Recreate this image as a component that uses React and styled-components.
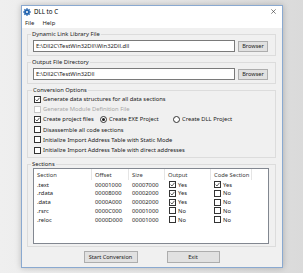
import React from 'react'
import styled, { createGlobalStyle } from 'styled-components'

const GlobalStyle = createGlobalStyle`
  html, body {
    margin: 0;
    padding: 0;
  }
  body {
    width: 303px;
    height: 273px;
    overflow: hidden;
    background: #e8e8e8;
    font-family: "Noto Sans", "Open Sans", sans-serif;
    color: #1a1a1a;
  }
`;

const Desktop = styled.div`
  width: 303px;
  height: 273px;
  box-sizing: border-box;
  padding: 5px 0 0 21px;
  background: linear-gradient(90deg, #efefef 0%, #e6e6e6 60%, #dadada 100%);
`;

const Window = styled.div`
  width: 262px;
  height: 263px;
  box-sizing: border-box;
  border: 1px solid #8aa9d0;
  background: #f0f0f0;
  box-shadow: 0 0 6px rgba(0, 0, 0, 0.22);
  display: flex;
  flex-direction: column;
`;

const TitleBar = styled.div`
  height: 11px;
  display: flex;
  align-items: center;
  gap: 3px;
  padding: 0 6px 0 1px;
  background: #fff;
  font-size: 6.2px;
  color: #000;
`;

const Title = styled.span`
  flex: 1;
`;

const Close = styled.svg`
  width: 5px;
  height: 5px;
`;

const MenuBar = styled.div`
  height: 11px;
  display: flex;
  align-items: center;
  gap: 8px;
  padding-left: 3px;
  background: #fff;
  font-size: 5.9px;
`;

const Body = styled.div`
  flex: 1;
  display: flex;
  flex-direction: column;
  padding: 0 6px 0 5px;
`;

const Group = styled.fieldset`
  margin: 2px 0 0;
  padding: ${p => p.$pad || '2px 7px 3px 5px'};
  border: 1px solid #dcdcdc;
  min-inline-size: 0;
`;

const Legend = styled.legend`
  padding: 0 1px;
  margin-left: -2px;
  font-size: 5.8px;
  line-height: 8px;
  color: #1a1a1a;
`;

const Row = styled.div`
  display: flex;
  align-items: center;
  gap: 3px;
`;

const TextBox = styled.div`
  flex: 1;
  height: 12px;
  box-sizing: border-box;
  border: 1px solid #7a7a7a;
  background: #fff;
  padding-left: 2px;
  display: flex;
  align-items: center;
  font-size: 5.8px;
`;

const Button = styled.div`
  width: ${p => p.$w || 30}px;
  height: ${p => p.$h || 11}px;
  box-sizing: border-box;
  border: 1px solid #adadad;
  background: #e1e1e1;
  display: flex;
  align-items: center;
  justify-content: center;
  font-size: 5.6px;
  color: #1a1a1a;
`;

const OptionRow = styled.div`
  height: 10.2px;
  display: flex;
  align-items: center;
`;

const Item = styled.div`
  display: flex;
  align-items: center;
  gap: 2px;
  width: ${p => (p.$w ? `${p.$w}px` : 'auto')};
  font-size: 5.8px;
  color: ${p => (p.$disabled ? '#a6a6a6' : '#1a1a1a')};
  white-space: nowrap;
`;

const Box = styled.span`
  width: 7px;
  height: 7px;
  box-sizing: border-box;
  border: 1px solid ${p => (p.$disabled ? '#c4c4c4' : '#333')};
  background: #fff;
  display: inline-flex;
  flex-shrink: 0;
`;

const Radio = styled.span`
  width: 7px;
  height: 7px;
  box-sizing: border-box;
  border: 1px solid #333;
  border-radius: 50%;
  background: #fff;
  display: inline-flex;
  align-items: center;
  justify-content: center;
  flex-shrink: 0;
  &::after {
    content: '';
    width: 3px;
    height: 3px;
    border-radius: 50%;
    background: ${p => (p.$on ? '#1a1a1a' : 'transparent')};
  }
`;

const Table = styled.div`
  height: 76px;
  box-sizing: border-box;
  border: 1px solid #828790;
  background: #fff;
`;

const Grid = styled.div`
  display: grid;
  grid-template-columns: 58px 37px 36px 46px 41px 1fr;
  height: ${p => p.$h}px;
  align-items: center;
  font-size: 5.8px;
  color: ${p => (p.$head ? '#3a3a3a' : '#1a1a1a')};
`;

const HeadCell = styled.div`
  height: 100%;
  display: flex;
  align-items: center;
  padding-left: 3px;
  border-right: ${p => (p.$last ? 'none' : '1px solid #e5e5e5')};
  box-sizing: border-box;
`;

const Cell = styled.div`
  display: flex;
  align-items: center;
  gap: 2px;
  padding-left: ${p => p.$pad || 3}px;
`;

const Footer = styled.div`
  display: flex;
  justify-content: center;
  gap: 29px;
  margin-top: 4px;
`;

const Check = ({ on, disabled }) => (
  <Box $disabled={disabled}>
    {on && (
      <svg width="5" height="5" viewBox="0 0 5 5">
        <path d="M0.6 2.6 L2 4 L4.5 0.8" fill="none" stroke="#333" strokeWidth="0.8" />
      </svg>
    )}
  </Box>
);

const Gear = () => (
  <svg width="8" height="8" viewBox="0 0 16 16">
    <g fill="#2666b0">
      {[0, 45, 90, 135, 180, 225, 270, 315].map(a => (
        <rect key={a} x="6.5" y="0.5" width="3" height="4" transform={`rotate(${a} 8 8)`} />
      ))}
      <circle cx="8" cy="8" r="5.2" />
    </g>
    <circle cx="8" cy="8" r="2" fill="#fff" />
  </svg>
);

const sections = [
  { name: '.text', offset: '00001000', size: '00007000', out: true, code: true },
  { name: '.rdata', offset: '00008000', size: '00002000', out: true, code: false },
  { name: '.data', offset: '0000A000', size: '00002000', out: true, code: false },
  { name: '.rsrc', offset: '0000C000', size: '00001000', out: false, code: false },
  { name: '.reloc', offset: '0000D000', size: '00001000', out: false, code: false },
];

export default function App() {
  return (
    <>
      <GlobalStyle />
      <Desktop>
        <Window>
          <TitleBar>
            <Gear />
            <Title>DLL to C</Title>
            <Close viewBox="0 0 5 5">
              <path d="M0.3 0.3 L4.7 4.7 M4.7 0.3 L0.3 4.7" stroke="#333" strokeWidth="0.6" />
            </Close>
          </TitleBar>
          <MenuBar>
            <span>File</span>
            <span>Help</span>
          </MenuBar>
          <Body>
            <Group>
              <Legend>Dynamic Link Library File</Legend>
              <Row>
                <TextBox>E:\Dll2C\TestWin32Dll\Win32Dll.dll</TextBox>
                <Button>Browser</Button>
              </Row>
            </Group>
            <Group>
              <Legend>Output File Directory</Legend>
              <Row>
                <TextBox>E:\Dll2C\TestWin32Dll</TextBox>
                <Button>Browser</Button>
              </Row>
            </Group>
            <Group $pad="0 7px 2px 6px">
              <Legend>Conversion Options</Legend>
              <OptionRow>
                <Item><Check on />Generate data structures for all data sections</Item>
              </OptionRow>
              <OptionRow>
                <Item $disabled><Check disabled />Generate Module Definition File</Item>
              </OptionRow>
              <OptionRow>
                <Item $w={66}><Check on />Create project files</Item>
                <Item $w={73}><Radio $on />Create EXE Project</Item>
                <Item><Radio />Create DLL Project</Item>
              </OptionRow>
              <OptionRow>
                <Item><Check />Disassemble all code sections</Item>
              </OptionRow>
              <OptionRow>
                <Item><Check />Initialize Import Address Table with Static Mode</Item>
              </OptionRow>
              <OptionRow>
                <Item><Check />Initialize Import Address Table with direct addresses</Item>
              </OptionRow>
            </Group>
            <Group $pad="0 6px 2px 5px">
              <Legend>Sections</Legend>
              <Table>
                <Grid $head $h={11}>
                  <HeadCell>Section</HeadCell>
                  <HeadCell>Offset</HeadCell>
                  <HeadCell>Size</HeadCell>
                  <HeadCell>Output</HeadCell>
                  <HeadCell>Code Section</HeadCell>
                  <HeadCell $last />
                </Grid>
                {sections.map(s => (
                  <Grid key={s.name} $h={8.75}>
                    <Cell>{s.name}</Cell>
                    <Cell>{s.offset}</Cell>
                    <Cell>{s.size}</Cell>
                    <Cell $pad={4}><Check on={s.out} />{s.out ? 'Yes' : 'No'}</Cell>
                    <Cell $pad={3}><Check on={s.code} />{s.code ? 'Yes' : 'No'}</Cell>
                  </Grid>
                ))}
              </Table>
            </Group>
            <Footer>
              <Button $w={54} $h={12}>Start Conversion</Button>
              <Button $w={53} $h={12}>Exit</Button>
            </Footer>
          </Body>
        </Window>
      </Desktop>
    </>
  )
}
